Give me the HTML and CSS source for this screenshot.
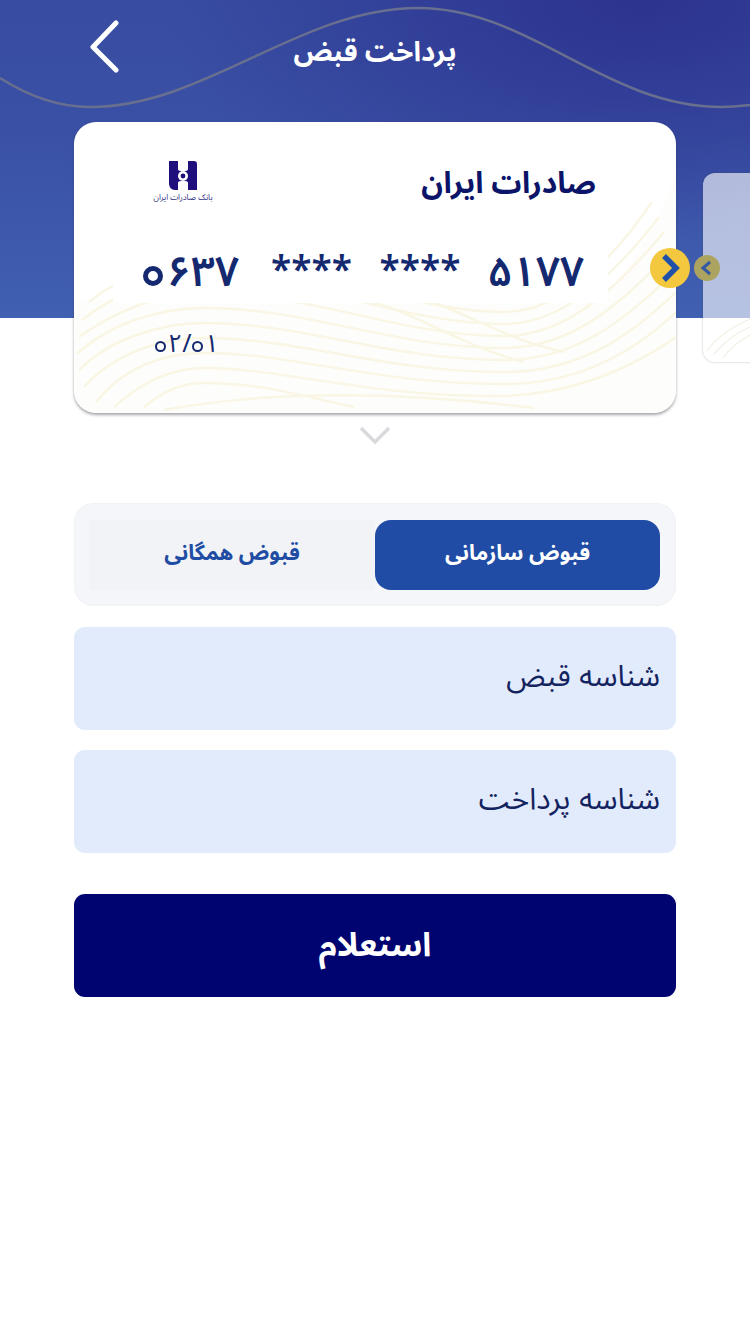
FILE: index.html
```html
<!DOCTYPE html>
<html lang="fa" dir="rtl">
<head>
<meta charset="utf-8">
<title>پرداخت قبض</title>
<link rel="stylesheet" href="styles.css">
</head>
<body>
<main class="page">
  <div class="hero" aria-hidden="true">
    <svg class="wave" viewBox="0 0 750 318" width="750" height="318">
      <path d="M0 78C30 97 60 107 90 107C205 107 300 8 418 8C530 8 605 107 722 107C732 107 741 106 750 105" fill="none" stroke="#696f8f" stroke-width="2.500"/>
    </svg>
  </div>
  <header class="topbar">
    <h1 class="title">پرداخت قبض</h1>
    <button class="back" aria-label="بازگشت">
      <svg viewBox="0 0 32 54" width="32" height="54"><path d="M28 4L5 28L28 51" fill="none" stroke="#fff" stroke-width="5" stroke-linecap="round" stroke-linejoin="round"/></svg>
    </button>
  </header>

  <section class="carousel">
    <article class="card">
      <svg class="guilloche" viewBox="0 0 602 291" width="602" height="291" aria-hidden="true">
        <path d="M602 53C580 110 555 150 526 178L0 178L0 269A22 22 0 0 0 22 291L580 291A22 22 0 0 0 602 269Z" fill="#fdfdfb"/>
        <g fill="none" stroke="#faf6e4" stroke-width="2.400">
          <path d="M70 285C90 268 110 261 130 261C190 261 230 275 280 285"/>
          <path d="M40 285C70 258 100 246 130 246C210 246 290 275 430 274C500 272 560 245 602 215"/>
          <path d="M22 280C50 245 90 231 130 231C220 231 300 262 430 262C505 262 560 230 602 190"/>
          <path d="M10 265C40 232 85 216 130 216C225 216 310 250 430 250C505 250 555 215 602 170"/>
          <path d="M5 248C35 218 85 201 130 201C230 201 315 238 430 238C500 238 550 200 600 150"/>
          <path d="M3 232C35 202 85 186 130 186C235 186 320 226 430 226C495 226 545 185 596 130"/>
          <path d="M5 215C40 190 85 171 130 171C240 171 325 214 430 214C490 214 540 170 590 110"/>
          <path d="M8 198C40 172 85 156 130 156C240 156 330 202 430 202C485 202 535 160 585 95"/>
          <path d="M15 180C45 155 85 141 130 141C245 141 335 190 430 190C480 190 530 150 578 80"/>
          <path d="M300 181C340 190 390 225 450 240"/>
          <path d="M360 181C400 195 440 220 490 230"/>
          <path d="M90 288C200 268 330 270 460 286"/>
        </g>
      </svg>
      <div class="card-head">
        <h2 class="bank-name">صادرات ایران</h2>
        <div class="logo">
          <svg viewBox="0 0 30 30" width="30" height="30" aria-hidden="true">
            <path d="M1 0H10V8C10 10 12 10 15 10C18 10 20 10 20 8V0H26C28 0 29 1 29 3V29H20V22C20 20 18 20 15 20C12 20 10 20 10 22V29H7C3 29 1 26 1 22Z" fill="#1f0f7d"/>
            <circle cx="15" cy="15" r="5" fill="#fff"/>
            <circle cx="15" cy="15" r="2.400" fill="#1f0f7d"/>
          </svg>
          <span class="logo-text">بانک صادرات ایران</span>
        </div>
      </div>
      <div class="pan" dir="ltr">
        <span class="pan-first"><span class="zero zero-big">۰</span>۶۳۷</span>
        <span class="pan-mask">****</span>
        <span class="pan-mask">****</span>
        <span class="pan-last">۵۱۷۷</span>
      </div>
      <div class="expiry" dir="ltr"><span class="zero zero-small">۰</span>۲/<span class="zero zero-small">۰</span>۱</div>
      <span class="arrow arrow-main" aria-hidden="true">
        <svg viewBox="0 0 40 40" width="40" height="40"><path d="M14 8L26 20L14 32" fill="none" stroke="#2150a8" stroke-width="5.500"/></svg>
      </span>
    </article>
    <article class="card-next">
      <svg class="next-lines" viewBox="0 0 60 189" width="60" height="189" aria-hidden="true">
        <g fill="none" stroke="#f3f0e6" stroke-width="1.200">
          <path d="M4 178C12 166 24 156 47 146"/><path d="M10 182C20 170 32 160 47 154"/><path d="M20 185C26 176 36 168 47 162"/>
        </g>
      </svg>
      <span class="arrow arrow-next" aria-hidden="true">
        <svg viewBox="0 0 26 26" width="26" height="26"><path d="M16 7L9 13L16 19" fill="none" stroke="#3558a5" stroke-width="3"/></svg>
      </span>
    </article>
  </section>

  <div class="more" aria-hidden="true">
    <svg viewBox="0 0 32 20" width="32" height="20"><path d="M2 3L16 17L30 3" fill="none" stroke="#d9dade" stroke-width="3.500"/></svg>
  </div>

  <section class="form">
    <div class="tabs">
      <button class="tab tab-active">قبوض سازمانی</button>
      <button class="tab">قبوض همگانی</button>
    </div>
    <div class="field">شناسه قبض</div>
    <div class="field">شناسه پرداخت</div>
    <button class="submit">استعلام</button>
  </section>
</main>
</body>
</html>
```
FILE: styles.css
```css
* { box-sizing: border-box; }
html, body { margin: 0; padding: 0; background: #fff; }
body { font-family: "Noto Sans Arabic", "Vazirmatn", "DejaVu Sans", "Noto Sans", sans-serif; color: #13235f; }
button { font: inherit; border: 0; background: none; padding: 0; }
.page { position: relative; width: 750px; height: 1334px; overflow: hidden; }
.hero { position: absolute; inset: 0 0 auto 0; height: 318px; background: radial-gradient(ellipse 480px 240px at 640px 0, #2c338f 0%, rgba(44,51,143,0) 100%), linear-gradient(180deg, #384da2 0%, #3a50a5 40%, #4060b2 100%); }
.wave { display: block; }
.topbar { position: relative; height: 122px; display: flex; justify-content: center; padding-top: 29px; }
.title { margin: 0; font-size: 27.500px; line-height: 46px; height: 46px; font-weight: 700; color: #fff; }
.back { position: absolute; left: 88px; top: 19px; width: 32px; height: 54px; }
.back svg { display: block; }

.carousel { position: relative; direction: ltr; display: flex; align-items: center; gap: 27px; padding-left: 74px; width: 750px; height: 291px; }
.card { position: relative; direction: rtl; flex: none; width: 602px; height: 291px; border-radius: 22px; background: #fff; box-shadow: 0 2px 3px rgba(60,60,70,.45); }
.guilloche { position: absolute; inset: 0; border-radius: 22px; }
.card-head { position: relative; display: flex; justify-content: space-between; padding: 37px 80px 0 78px; height: 116px; }
.bank-name { margin: 0; font-size: 30px; line-height: 50px; height: 50px; font-weight: 700; color: #0b1468; }
.logo { display: flex; flex-direction: column; align-items: center; width: 62px; margin-top: 2px; }
.logo svg { display: block; }
.logo-text { font-size: 8px; line-height: 14px; height: 14px; white-space: nowrap; color: #2c2c80; }
.pan { position: relative; margin-right: 68px; width: 495px; height: 65px; background: #fff; display: flex; align-items: center; padding: 4px 0 0 30px; font-weight: 600; font-size: 42px; color: #14296f; }
.pan-first { width: 128px; letter-spacing: 1.500px; }
.pan-mask { width: 108.500px; margin-top: -3px; font-size: 37px; line-height: 1; }
.pan-last { width: 96px; }
.zero { display: inline-block; overflow: hidden; border-style: solid; border-color: #14296f; border-radius: 50%; color: transparent; font-size: 8px; line-height: 8px; text-align: center; }
.zero-big { width: 20px; height: 20px; border-width: 5px; margin-right: 4px; }
.zero-small { width: 11px; height: 11px; border-width: 2px; margin-right: 2px; font-size: 5px; line-height: 5px; letter-spacing: 0; }
.expiry { position: relative; margin: 25px 451px 0 0; font-size: 25px; line-height: 32px; color: #14296f; width: 70px; }
.arrow { position: absolute; border-radius: 50%; display: block; }
.arrow svg { display: block; }
.arrow-main { left: 576px; top: 126px; width: 40px; height: 40px; background: #f3c73e; z-index: 3; }
.card-next { position: relative; flex: none; width: 60px; height: 189px; border-radius: 12px; background: rgba(255,255,255,.62); box-shadow: 0 0 2px rgba(70,70,80,.45); }
.arrow-next { left: -9px; top: 82px; width: 26px; height: 26px; background: #ada360; }
.next-lines { display: block; }

.more { display: flex; justify-content: center; padding: 12px 0 0; height: 90px; }
.more svg { display: block; }

.form { display: flex; flex-direction: column; gap: 20px; margin: 0 74px; }
.tabs { display: flex; height: 103px; margin-bottom: 1px; padding: 17px 16px 16px 15px; border-radius: 20px; background: #f4f6f9; box-shadow: inset 0 0 0 1px #f0f2f5; }
.tab { flex: 1; height: 70px; padding-bottom: 5px; font-size: 21.500px; font-weight: 700; color: #214ca3; background: #f1f3f6; }
.tab-active { flex: none; width: 285px; border-radius: 16px; background: #204ca6; color: #fff; }
.field { height: 103px; padding: 0 16px; border-radius: 11px; background: #e2ebfb; font-size: 30px; line-height: 100px; color: #13235f; word-spacing: 1px; }
.submit { height: 103px; margin-top: 21px; border-radius: 11px; background: #000470; color: #fff; font-size: 33px; font-weight: 700; }
```
